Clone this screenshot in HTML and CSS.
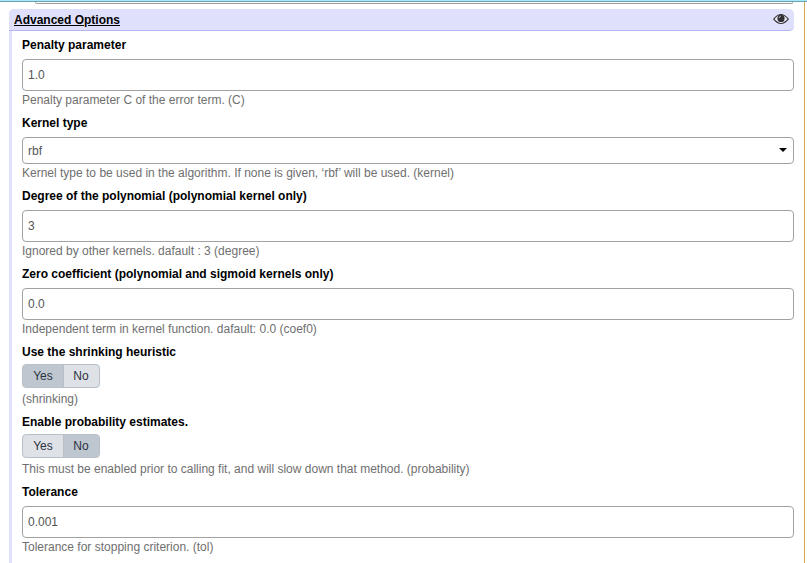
FILE: index.html
```html
<!DOCTYPE html>
<html lang="en">
<head>
<meta charset="utf-8">
<title>Advanced Options</title>
<link rel="stylesheet" href="styles.css">
</head>
<body>
<div class="topbar"></div>
<main class="panel">
  <div class="previous"></div>
  <section class="section">
    <header class="section-header">
      <span class="title">Advanced Options</span>
      <svg class="eye" viewBox="0 0 16 12">
        <path d="M.7 6.1Q8-3.2 15.3 6.1Q8 14.8 .7 6.1Z" fill="#edeaf5" stroke="#343437" stroke-width="1.1"/>
        <circle cx="8" cy="5.4" r="3.6" fill="#303034"/>
        <path d="M6 5Q6.2 3.4 7.8 3.1" fill="none" stroke="#c5c5cf" stroke-width="1"/>
      </svg>
    </header>
    <div class="field">
      <label class="label">Penalty parameter</label>
      <div class="input">1.0</div>
      <div class="help">Penalty parameter C of the error term. (C)</div>
    </div>
    <div class="field">
      <label class="label">Kernel type</label>
      <div class="input select"><span>rbf</span><svg class="caret" viewBox="0 0 8 4"><path d="M0 0H8L4 4Z"/></svg></div>
      <div class="help">Kernel type to be used in the algorithm. If none is given, ‘rbf’ will be used. (kernel)</div>
    </div>
    <div class="field">
      <label class="label">Degree of the polynomial (polynomial kernel only)</label>
      <div class="input">3</div>
      <div class="help">Ignored by other kernels. dafault : 3 (degree)</div>
    </div>
    <div class="field">
      <label class="label">Zero coefficient (polynomial and sigmoid kernels only)</label>
      <div class="input">0.0</div>
      <div class="help">Independent term in kernel function. dafault: 0.0 (coef0)</div>
    </div>
    <div class="field">
      <label class="label">Use the shrinking heuristic</label>
      <div class="toggle"><span class="option yes active">Yes</span><span class="option no">No</span></div>
      <div class="help">(shrinking)</div>
    </div>
    <div class="field">
      <label class="label">Enable probability estimates.</label>
      <div class="toggle"><span class="option yes">Yes</span><span class="option no active">No</span></div>
      <div class="help">This must be enabled prior to calling fit, and will slow down that method. (probability)</div>
    </div>
    <div class="field">
      <label class="label">Tolerance</label>
      <div class="input">0.001</div>
      <div class="help">Tolerance for stopping criterion. (tol)</div>
    </div>
  </section>
</main>
</body>
</html>
```
FILE: styles.css
```css
* { box-sizing: border-box; }
body {
  margin: 0;
  height: 563px;
  overflow: hidden;
  display: flex;
  flex-direction: column;
  background: #fff;
  font: 12px/18px "Liberation Sans", Arial, sans-serif;
  color: #000;
}
.topbar {
  flex: none;
  height: 2px;
  background: #a4e8fa;
  border-bottom: 1px solid #6fa3ad;
}
.panel {
  flex: 1;
  width: 805px;
  padding: 0 10px 0 9px;
  border-right: 1px solid #d2ae55;
}
.previous {
  height: 2px;
  margin: 0 1px 5px 26px;
  border: 1px solid #a2a2a2;
  border-top: 0;
  border-radius: 0 0 4px 4px;
}
.section {
  height: 570px;
  border-left: 3px solid #dfe0fb;
  border-radius: 5px 5px 0 0;
}
.section-header {
  display: flex;
  align-items: center;
  justify-content: space-between;
  height: 22px;
  margin-left: -3px;
  padding: 0 5px;
  background: #dfe0fb;
  border-bottom: 1px solid #b4b5f1;
  border-radius: 5px;
  border-bottom-left-radius: 0;
  font-weight: bold;
}
.title { text-decoration: underline; }
.eye { width: 16px; height: 12px; margin-top: -2px; }
.field { padding: 5px 0 0 10px; }
.label { display: block; font-weight: bold; }
.input {
  height: 32px;
  margin-top: 5px;
  padding: 0 5px;
  border: 1px solid #a2a2a2;
  border-radius: 4px;
  line-height: 30px;
  color: #555;
}
.select {
  display: flex;
  align-items: center;
  justify-content: space-between;
  height: 27px;
  padding-top: 1px;
  line-height: 24px;
}
.caret { width: 8px; height: 4px; margin: -3px 1px 0 0; }
.help { color: #6f6f6f; }
.toggle {
  display: flex;
  width: 78px;
  height: 24px;
  margin: 3px 0 2px;
  border: 1px solid #b7bfc7;
  border-radius: 4px;
  overflow: hidden;
  line-height: 22px;
  text-align: center;
  color: #2c3143;
  background: #dee2e6;
}
.yes { width: 41px; border-right: 1px solid #b7bfc7; }
.no { flex: 1; padding-right: 1px; }
.active { background: #bec7cf; }
```
